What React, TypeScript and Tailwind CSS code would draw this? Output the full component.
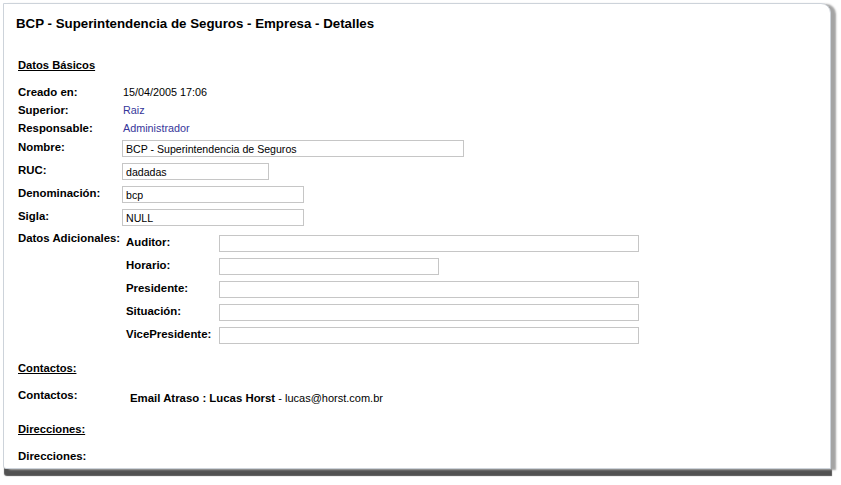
import React from "react";

const font = { fontFamily: '"Liberation Sans", Arial, sans-serif' };

function Field({ label, value, width }: { label: string; value?: string; width: string }) {
  return (
    <div className="flex h-[23px]">
      <div className="w-[104px] text-[11.4px] font-bold leading-[13px] pt-[1px]">{label}</div>
      <input
        readOnly
        defaultValue={value ?? ""}
        className={`${width} h-[17px] border border-[#c6c6c6] bg-white pl-[3px] text-[10.6px] leading-[15px] text-black outline-none`}
      />
    </div>
  );
}

function SubField({ label, width }: { label: string; width: string }) {
  return (
    <div className="flex h-[23px]">
      <div className="w-[93px] text-[11.4px] font-bold leading-[13px] pt-[1px]">{label}</div>
      <input
        readOnly
        defaultValue=""
        className={`${width} h-[17px] border border-[#c6c6c6] bg-white outline-none`}
      />
    </div>
  );
}

export default function App() {
  return (
    <div className="min-h-screen bg-white pl-[3px] pt-[3px] text-black" style={font}>
      <div className="w-[828px] h-[466px] bg-white border border-[#cdd3da] rounded-tr-[10px] rounded-bl-[3px] shadow-[5px_1px_2px_#a4a4a4,1px_7px_1px_#525252] pt-[12px]">
        <h1 className="pl-[12px] text-[13.3px] font-bold leading-[16px]">
          BCP - Superintendencia de Seguros - Empresa - Detalles
        </h1>
        <div className="pl-[14px]">
          <div className="mt-[26px] text-[11.2px] font-bold underline leading-[14px]">Datos Básicos</div>

          <div className="mt-[11px] grid grid-cols-[104px_1fr] leading-[18px]">
            <div className="font-bold text-[11.4px]">Creado en:</div>
            <div className="pl-[1px] text-[10.8px]">15/04/2005 17:06</div>
            <div className="font-bold text-[11.4px]">Superior:</div>
            <div className="pl-[1px] text-[10.8px] text-[#36369a]">Raiz</div>
            <div className="font-bold text-[11.4px]">Responsable:</div>
            <div className="pl-[1px] text-[10.8px] text-[#36369a]">Administrador</div>
          </div>

          <div className="mt-[3px] flex flex-col">
            <Field label="Nombre:" value="BCP - Superintendencia de Seguros" width="w-[342px]" />
            <Field label="RUC:" value="dadadas" width="w-[147px]" />
            <Field label="Denominación:" value="bcp" width="w-[182px]" />
            <Field label="Sigla:" value="NULL" width="w-[182px]" />
            <div className="flex">
              <div className="w-[104px] text-[11.4px] font-bold leading-[13px] whitespace-nowrap">Datos Adicionales:</div>
              <div className="flex flex-col pt-[3px] pl-[4px]">
                <SubField label="Auditor:" width="w-[420px]" />
                <SubField label="Horario:" width="w-[220px]" />
                <SubField label="Presidente:" width="w-[420px]" />
                <SubField label="Situación:" width="w-[420px]" />
                <SubField label="VicePresidente:" width="w-[420px]" />
              </div>
            </div>
          </div>

          <div className="mt-[11px] text-[11.2px] font-bold underline leading-[14px]">Contactos:</div>
          <div className="mt-[13px] flex leading-[14px]">
            <div className="w-[104px] font-bold text-[11.4px]">Contactos:</div>
            <div className="pl-[8px] pt-[3px] text-[11px]">
              <span className="font-bold text-[11.4px]">Email Atraso : Lucas Horst</span> - lucas@horst.com.br
            </div>
          </div>

          <div className="mt-[17px] text-[11.2px] font-bold underline leading-[14px]">Direcciones:</div>
          <div className="mt-[13px] text-[11.4px] font-bold leading-[14px]">Direcciones:</div>
        </div>
      </div>
    </div>
  );
}
